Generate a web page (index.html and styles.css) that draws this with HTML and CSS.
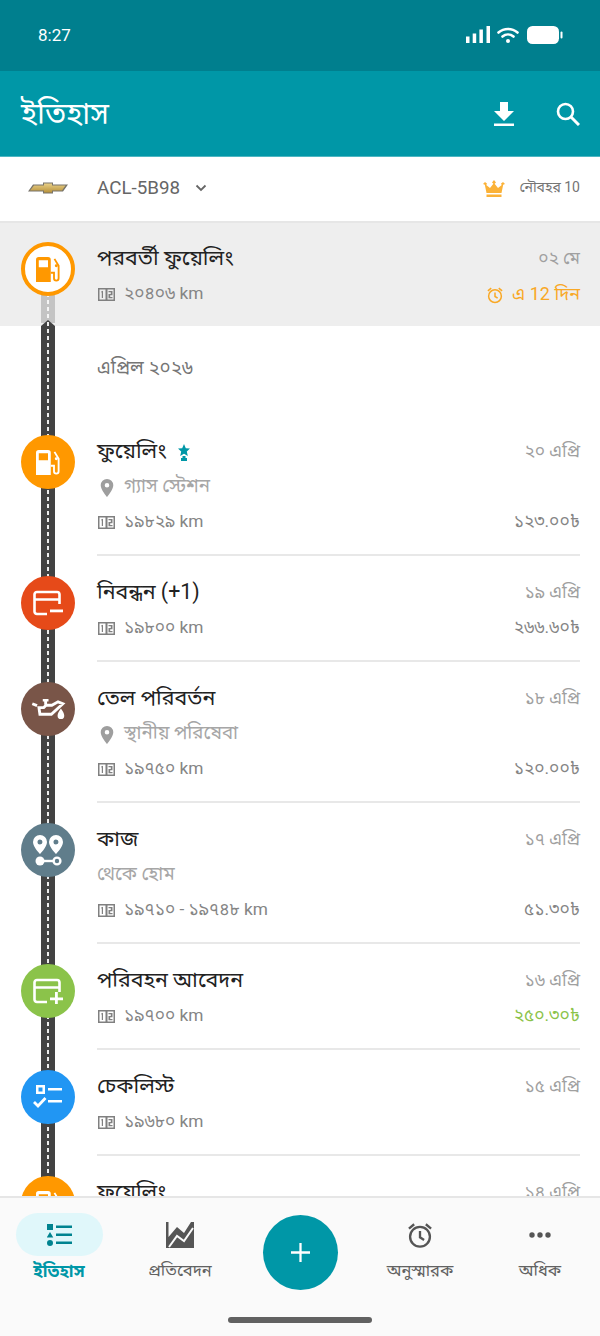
FILE: index.html
```html
<!DOCTYPE html>
<html lang="bn">
<head>
<meta charset="utf-8">
<title>ইতিহাস</title>
<link rel="stylesheet" href="styles.css">
</head>
<body>
<svg class="defs" width="0" height="0" aria-hidden="true">
  <symbol id="odo" viewBox="0 0 17 13"><path fill="currentColor" fill-rule="evenodd" d="M0 0h17v13H0zM1.500 1.500v10h6v-10zM9.500 1.500v10h6v-10z"/><path fill="currentColor" d="M3.200 3.500L5 2.800V10H3.800V4.300L3.200 4.600zM10.500 3h4v1.300h-4zM12.800 4.300h1.700v1.700h-1.700zM10.500 6h4v1.300h-4zM10.500 7.300h1.700V9h-1.700zM10.500 9h4v1.300h-4z"/></symbol>
  <symbol id="pin" viewBox="0 0 14 18"><path fill="currentColor" fill-rule="evenodd" d="M7 0a6.300 6.300 0 0 1 6.300 6.300C13.300 11 7 18 7 18S.7 11 .7 6.300A6.300 6.300 0 0 1 7 0zm0 4a2.300 2.300 0 1 0 0 4.600A2.300 2.300 0 0 0 7 4z"/></symbol>
  <symbol id="pump" viewBox="0 0 26 27"><path fill="currentColor" fill-rule="evenodd" d="M3 0h10a3 3 0 0 1 3 3v24H0V3a3 3 0 0 1 3-3zm0 3.500V11h10V3.500z"/><path fill="none" stroke="currentColor" stroke-width="2" d="M16 17h3.500v6a2.500 2.500 0 0 0 5 0V9.500L20 2"/><circle cx="22" cy="9.500" r="1.600" fill="currentColor"/></symbol>
  <symbol id="alarm" viewBox="0 0 24 24"><circle cx="12" cy="13.500" r="8.500" fill="none" stroke="currentColor" stroke-width="2"/><path fill="none" stroke="currentColor" stroke-width="2" d="M12 8.500V14l3.500 2.200M2.500 6.500L7 2.800M21.500 6.500L17 2.800"/></symbol>
</svg>
<div class="screen">
  <header class="status">
    <span class="clock">8:27</span>
    <div class="status-icons">
      <svg class="sig" viewBox="0 0 24 17"><path fill="#fff" d="M0 10.500h3.500V17H0zM6.700 7.500h3.500V17H6.700zM13.400 3.500h3.500V17h-3.500zM20.500 0H24v17h-3.500z"/></svg>
      <svg class="wifi" viewBox="0 0 22 16"><path fill="none" stroke="#fff" stroke-width="2.600" stroke-linecap="round" d="M1.500 5.500C7 .8 15 .8 20.500 5.500M5.500 9.500c3.200-2.600 7.800-2.600 11 0"/><circle cx="11" cy="14" r="2" fill="#fff"/></svg>
      <svg class="batt" viewBox="0 0 36 18"><rect width="32" height="18" rx="5.500" fill="#fff"/><rect x="33.500" y="5.500" width="2" height="7" rx="1" fill="#fff"/></svg>
    </div>
  </header>
  <div class="appbar">
    <h1 class="appbar-title">ইতিহাস</h1>
    <svg class="ic-dl" viewBox="0 0 20 24"><path fill="#fff" d="M6 0h8v9h6l-10 10L0 9h6zM0 21.500h20V24H0z"/></svg>
    <svg class="ic-search" viewBox="0 0 24 24"><circle cx="9.500" cy="9.500" r="7.500" fill="none" stroke="#fff" stroke-width="2.600"/><path stroke="#fff" stroke-width="3" d="M15 15l8 8"/></svg>
  </div>
  <div class="vehicle">
    <svg class="logo" viewBox="0 0 40 12">
      <defs><linearGradient id="gold" x1="0" y1="0" x2="0" y2="1"><stop offset="0" stop-color="#e8cf86"/><stop offset="1" stop-color="#b8923c"/></linearGradient></defs>
      <path fill="#77736a" d="M5 2.500h10V.5h10v2h15l-5 7H25v2H15v-2H0z"/>
      <path fill="url(#gold)" d="M6 3.500h10v-2h8v2h13.500l-3.500 5H24v2h-8v-2H2z"/>
    </svg>
    <span class="plate">ACL-5B98</span>
    <svg class="caret" viewBox="0 0 12 8"><path fill="none" stroke="#666" stroke-width="1.800" d="M1.500 1.500L6 6l4.500-4.500"/></svg>
    <svg class="crown" viewBox="0 0 22 17"><path fill="#fbb238" d="M11 0l2 2.500-1.400 1.300L15 8l3.800-3-.9-1.300L20 2l2 2-1.800.8L18.500 13h-15L1.800 4.800 0 4l2-2 2.100 1.700L3.200 5 7 8l3.400-4.200L9 2.500zM3.500 14.500h15V17h-15z"/></svg>
    <span class="fleet">নৌবহর 10</span>
  </div>
  <main class="feed">
    <div class="road"></div>
    <section class="next">
      <div class="dot dot-next"><svg class="glyph-pump"><use href="#pump"/></svg></div>
      <div class="next-body">
        <div class="line"><span class="title">পরবর্তী ফুয়েলিং</span><span class="date">০২ মে</span></div>
        <div class="line"><span class="meta"><svg class="odo"><use href="#odo"/></svg>২০৪০৬ km</span><span class="due"><svg class="due-ic"><use href="#alarm"/></svg>এ 12 দিন</span></div>
      </div>
    </section>
    <div class="month">এপ্রিল ২০২৬</div>
    <article class="row">
      <div class="dot orange"><svg class="glyph-pump"><use href="#pump"/></svg></div>
      <div class="body">
        <div class="line"><span class="title">ফুয়েলিং<svg class="award" viewBox="0 0 12 17"><path fill="#0097a7" d="M6 0l1.800 4.200 4.200.4-3.200 2.900 1 4.500L6 9.700 2.200 12l1-4.500L0 4.600l4.200-.4zM4.500 12h3v2h1.500v3H3v-3h1.500z"/></svg></span><span class="date">২০ এপ্রি</span></div>
        <div class="line"><span class="place"><svg class="pin"><use href="#pin"/></svg>গ্যাস স্টেশন</span></div>
        <div class="line"><span class="meta"><svg class="odo"><use href="#odo"/></svg>১৯৮২৯ km</span><span class="amount">১২৩.০০৳</span></div>
      </div>
    </article>
    <article class="row">
      <div class="dot red"><svg class="glyph" viewBox="0 0 30 26"><path fill="none" stroke="#fff" stroke-width="2.600" d="M14 24H4a2.500 2.500 0 0 1-2.500-2.500v-17A2.500 2.500 0 0 1 4 2h20a2.500 2.500 0 0 1 2.500 2.500V14M2 9.500h24"/><path fill="#fff" d="M17 19.500h13v2.800H17z"/></svg></div>
      <div class="body">
        <div class="line"><span class="title">নিবন্ধন (+1)</span><span class="date">১৯ এপ্রি</span></div>
        <div class="line"><span class="meta"><svg class="odo"><use href="#odo"/></svg>১৯৮০০ km</span><span class="amount">২৬৬.৬০৳</span></div>
      </div>
    </article>
    <article class="row">
      <div class="dot brown"><svg class="glyph-oil" viewBox="0 0 36 22"><path fill="none" stroke="#fff" stroke-width="3" d="M8 9h5l2.500-2.500h6L28 3l5 2-12 11H9z"/><path stroke="#fff" stroke-width="3" d="M12 1h6M15 1v5M1 5l5 2"/><path fill="#fff" d="M31 10c2 3 3.500 5 3.500 7.500a3.500 3.500 0 0 1-7 0C27.500 15 29 13 31 10z"/></svg></div>
      <div class="body">
        <div class="line"><span class="title">তেল পরিবর্তন</span><span class="date">১৮ এপ্রি</span></div>
        <div class="line"><span class="place"><svg class="pin"><use href="#pin"/></svg>স্থানীয় পরিষেবা</span></div>
        <div class="line"><span class="meta"><svg class="odo"><use href="#odo"/></svg>১৯৭৫০ km</span><span class="amount">১২০.০০৳</span></div>
      </div>
    </article>
    <article class="row">
      <div class="dot slate"><svg class="glyph-trip" viewBox="0 0 30 31"><path fill="#fff" fill-rule="evenodd" d="M7 0a7 7 0 0 1 7 7c0 5-7 12-7 12S0 12 0 7a7 7 0 0 1 7-7zm0 4.500a2.500 2.500 0 1 0 0 5 2.500 2.500 0 0 0 0-5zM23 0a7 7 0 0 1 7 7c0 5-7 12-7 12s-7-7-7-12a7 7 0 0 1 7-7zm0 4.500a2.500 2.500 0 1 0 0 5 2.500 2.500 0 0 0 0-5z"/><circle cx="7" cy="26" r="4.500" fill="#fff"/><path stroke="#fff" stroke-width="2.400" d="M10 26h10"/><circle cx="24" cy="26" r="3.400" fill="none" stroke="#fff" stroke-width="2.400"/></svg></div>
      <div class="body">
        <div class="line"><span class="title">কাজ</span><span class="date">১৭ এপ্রি</span></div>
        <div class="line"><span class="place">থেকে হোম</span></div>
        <div class="line"><span class="meta"><svg class="odo"><use href="#odo"/></svg>১৯৭১০ - ১৯৭৪৮ km</span><span class="amount">৫১.৩০৳</span></div>
      </div>
    </article>
    <article class="row">
      <div class="dot green"><svg class="glyph" viewBox="0 0 30 26"><path fill="none" stroke="#fff" stroke-width="2.600" d="M14 24H4a2.500 2.500 0 0 1-2.500-2.500v-17A2.500 2.500 0 0 1 4 2h20a2.500 2.500 0 0 1 2.500 2.500V14M2 9.500h24"/><path fill="#fff" d="M22 14h2.800v5.500H30v2.800h-5.200V26H22v-3.700h-5v-2.800h5z"/></svg></div>
      <div class="body">
        <div class="line"><span class="title">পরিবহন আবেদন</span><span class="date">১৬ এপ্রি</span></div>
        <div class="line"><span class="meta"><svg class="odo"><use href="#odo"/></svg>১৯৭০০ km</span><span class="amount income">২৫০.৩০৳</span></div>
      </div>
    </article>
    <article class="row">
      <div class="dot blue"><svg class="glyph" viewBox="0 0 30 24"><path fill="#fff" fill-rule="evenodd" d="M3 0h9v9H3zm2.500 2.500v4h4v-4z"/><path fill="#fff" d="M15 3h14v2.600H15zM15 15h14v2.600H15z"/><path fill="none" stroke="#fff" stroke-width="2.800" d="M1 17l4 4 7.500-8"/></svg></div>
      <div class="body">
        <div class="line"><span class="title">চেকলিস্ট</span><span class="date">১৫ এপ্রি</span></div>
        <div class="line"><span class="meta"><svg class="odo"><use href="#odo"/></svg>১৯৬৮০ km</span></div>
      </div>
    </article>
    <article class="row">
      <div class="dot orange"><svg class="glyph-pump"><use href="#pump"/></svg></div>
      <div class="body">
        <div class="line"><span class="title">ফুয়েলিং</span><span class="date">১৪ এপ্রি</span></div>
      </div>
    </article>
  </main>
  <nav class="tabs">
    <div class="tab active">
      <div class="tab-ic pill"><svg class="ic-list" viewBox="0 0 25 22"><path fill="#00838f" d="M0 0h6v6H0zM3 8l3.300 5.500H-.3zM3 16a3 3 0 1 1 0 6 3 3 0 0 1 0-6zM9 1.500h16v2.600H9zM9 9.500h16v2.600H9zM9 17.500h16v2.600H9z"/></svg></div>
      <span class="tab-label">ইতিহাস</span>
    </div>
    <div class="tab">
      <div class="tab-ic"><svg class="ic-chart" viewBox="0 0 28 26"><path fill="#555" d="M0 0h2.500v15L11 5l7 6 7-11h3v26H0z"/><path fill="none" stroke="#fafafa" stroke-width="2" d="M3 25l8-11 7 5 9-13"/></svg></div>
      <span class="tab-label">প্রতিবেদন</span>
    </div>
    <div class="tab tab-fab">
      <button class="fab" type="button" aria-label="যোগ করুন"><svg class="ic-plus" viewBox="0 0 20 20"><path stroke="#fff" stroke-width="2.400" d="M10 0v20M0 10h20"/></svg></button>
    </div>
    <div class="tab">
      <div class="tab-ic"><svg class="ic-alarm"><use href="#alarm"/></svg></div>
      <span class="tab-label">অনুস্মারক</span>
    </div>
    <div class="tab">
      <div class="tab-ic"><svg class="ic-dots" viewBox="0 0 22 6"><circle cx="3" cy="3" r="2.700" fill="#555"/><circle cx="11" cy="3" r="2.700" fill="#555"/><circle cx="19" cy="3" r="2.700" fill="#555"/></svg></div>
      <span class="tab-label">অধিক</span>
    </div>
    <div class="home-bar"></div>
  </nav>
</div>
</body>
</html>
```
FILE: styles.css
```css
* { box-sizing: border-box; }
html, body { margin: 0; padding: 0; }
body { font-family: Roboto, "Noto Sans", "Noto Sans Bengali", sans-serif; background: #fff; color: #212121; }
.defs { position: absolute; }
.screen { width: 600px; height: 1336px; display: flex; flex-direction: column; overflow: hidden; }

.status { height: 71px; flex: none; background: #007f8e; display: flex; align-items: center; justify-content: space-between; padding: 0 37px 2px 38px; color: #fff; }
.clock { font-size: 17px; }
.status-icons { display: flex; align-items: center; }
.sig { width: 24px; height: 17px; }
.wifi { width: 22px; height: 16px; margin-left: 7px; }
.batt { width: 36px; height: 18px; margin-left: 8px; }

.appbar { height: 86px; flex: none; background: #0097a7; border-bottom: 1px solid #4db6c2; display: flex; align-items: center; padding: 0 20px 0 21px; color: #fff; }
.appbar-title { margin: 0 auto 0 0; font-size: 30px; font-weight: 400; line-height: 1; }
.ic-dl { width: 20px; height: 24px; }
.ic-search { width: 24px; height: 24px; margin-left: 42px; }

.vehicle { height: 66px; flex: none; background: #fff; border-bottom: 2px solid #e6e6e6; display: flex; align-items: center; padding: 0 20px 2px 28px; }
.logo { width: 40px; height: 12px; }
.plate { margin-left: 29px; font-size: 18.800px; color: #666; }
.caret { width: 12px; height: 8px; margin-left: 15px; margin-right: auto; }
.crown { width: 22px; height: 17px; }
.fleet { margin-left: 14px; font-size: 14px; color: #757575; }

.feed { flex: 1; min-height: 0; position: relative; overflow: hidden; background: #fff; }
.road { position: absolute; left: 41px; top: 97px; bottom: 0; width: 14px; background: #424242; clip-path: polygon(0 6px, 50% 0, 100% 6px, 100% 100%, 0 100%); z-index: 1; }
.road::after { content: ""; position: absolute; left: 6px; top: 2px; bottom: 0; width: 2px; background: repeating-linear-gradient(#eee 0 4px, transparent 4px 7px); }

.next { height: 103px; position: relative; background: #eee; padding: 0 20px 0 21px; display: flex; }
.next::after { content: ""; position: absolute; left: 41px; top: 70px; height: 30px; width: 14px; background: repeating-linear-gradient(#f5f5f5 0 4px, transparent 4px 7px) center / 2px 100% no-repeat, #c4c4c4; }
.next-body { flex: 1; margin-left: 22px; padding-top: 19px; }

.dot { width: 54px; height: 54px; flex: none; border-radius: 50%; display: flex; align-items: center; justify-content: center; color: #fff; position: relative; z-index: 2; }
.dot-next { margin-top: 19px; background: #fff; border: 4px solid #ff9800; color: #ff9800; }
.orange { background: #ff9800; }
.red { background: #e64a19; }
.brown { background: #795548; }
.slate { background: #607d8b; }
.green { background: #8bc34a; }
.blue { background: #2196f3; }
.glyph-pump { width: 24px; height: 25px; }
.glyph { width: 30px; height: 26px; }
.glyph-oil { width: 35px; height: 21px; }
.glyph-trip { width: 30px; height: 31px; }

.month { height: 89px; padding: 27px 0 0 97px; font-size: 18.800px; line-height: 30px; color: #757575; }

.row { display: flex; padding: 0 20px 0 21px; }
.row .dot { margin-top: 20px; }
.body { flex: 1; min-width: 0; margin-left: 22px; padding: 20px 0 14px; border-bottom: 2px solid #e8e8e8; }
.line { height: 35px; display: flex; align-items: center; justify-content: space-between; }
.title { font-size: 21.400px; color: #222; display: flex; align-items: center; }
.date { font-size: 17.400px; color: #a0a0a0; }
.meta { font-size: 17.300px; color: #858585; display: flex; align-items: center; }
.place { font-size: 18.700px; color: #a6a6a6; display: flex; align-items: center; }
.amount { font-size: 17.400px; color: #858585; }
.income { color: #8bc34a; }
.due { font-size: 18px; color: #f9a825; display: flex; align-items: center; }
.odo { width: 17px; height: 13px; margin: 0 9px 0 1px; color: #808080; }
.pin { width: 14px; height: 18px; margin: 0 10px 0 3px; color: #9e9e9e; }
.due-ic { width: 18px; height: 18px; margin-right: 8px; }
.award { width: 12px; height: 17px; margin-left: 11px; }

.tabs { height: 140px; flex: none; position: relative; z-index: 3; background: #fafafa; border-top: 2px solid #e6e6e6; display: grid; grid-template-columns: repeat(5, 120px); align-items: start; }
.tab { display: flex; flex-direction: column; align-items: center; padding-top: 15px; }
.tab-ic { width: 87px; height: 43px; display: flex; align-items: center; justify-content: center; }
.pill { background: #e0f7fa; border-radius: 22px; }
.tab-label { margin-top: 4px; font-size: 16.500px; line-height: 22px; color: #616161; }
.active .tab-label { color: #0097a7; font-weight: 700; font-size: 17px; }
.active { padding-right: 2px; }
.tab-fab { padding-top: 17px; }
.fab { width: 75px; height: 75px; border: 0; padding: 0; border-radius: 50%; background: #0097a7; display: flex; align-items: center; justify-content: center; }
.ic-plus { width: 19px; height: 19px; }
.ic-list { width: 25px; height: 22px; }
.ic-chart { width: 28px; height: 26px; }
.ic-alarm { width: 28px; height: 28px; color: #555; }
.ic-dots { width: 22px; height: 6px; }
.home-bar { position: absolute; left: 228px; top: 119px; width: 144px; height: 6px; border-radius: 3px; background: #616161; }
```
